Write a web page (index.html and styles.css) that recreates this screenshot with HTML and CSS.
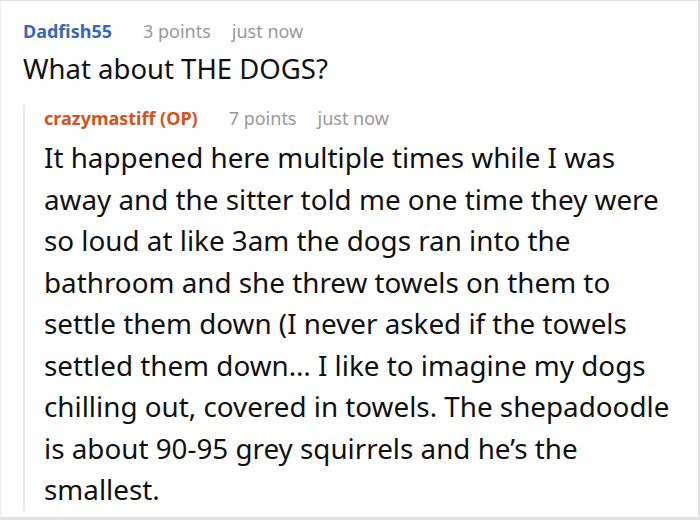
FILE: index.html
```html
<!DOCTYPE html>
<html>
<head>
<meta charset="utf-8">
<link rel="stylesheet" href="styles.css">
</head>
<body>
<div class="frame">
  <div class="comment">
    <div class="meta">
      <span class="author blue">Dadfish55</span>
      <span class="points">3 points</span>
      <span class="time">just now</span>
    </div>
    <div class="text top-text">What about THE DOGS?</div>
    <div class="reply">
      <div class="meta reply-meta">
        <span class="author orange">crazymastiff (OP)</span>
        <span class="points">7 points</span>
        <span class="time">just now</span>
      </div>
      <div class="text reply-text">It happened here multiple times while I was away and the sitter told me one time they were so loud at like 3am the dogs ran into the bathroom and she threw towels on them to settle them down (I never asked if the towels settled them down… I like to imagine my dogs chilling out, covered in towels. The shepadoodle is about 90-95 grey squirrels and he’s the smallest.</div>
    </div>
  </div>
</div>
</body>
</html>
```

FILE: styles.css
```css
html, body {
  margin: 0;
  padding: 0;
  background: #ffffff;
}
.frame {
  width: 700px;
  height: 520px;
  box-sizing: border-box;
  border-top: 1px solid #e2e2e2;
  border-right: 2px solid #e2e2e2;
  border-bottom: 3px solid #e2e2e2;
  border-left: 1px solid #eeeeee;
  overflow: hidden;
  font-family: "Noto Sans", sans-serif;
  color: #111111;
}
.comment {
  padding: 17px 0 0 22px;
}
.meta {
  font-size: 18px;
  line-height: 26px;
  display: flex;
  align-items: baseline;
}
.author {
  font-weight: 700;
  margin-right: 31px;
}
.blue { color: #3568bb; }
.orange { color: #d4521c; }
.points {
  color: #999999;
  margin-right: 21px;
}
.time {
  color: #999999;
}
.top-text {
  font-size: 27.5px;
  line-height: 38px;
  margin-top: 6px;
}
.reply {
  margin-top: 21px;
  border-left: 2px solid #e8e8e8;
  padding-left: 19px;
  padding-right: 14px;
}
.reply-meta {
  margin-top: -4px;
}
.reply-text {
  font-size: 27.8px;
  line-height: 41.5px;
  margin-top: 6px;
}
```
